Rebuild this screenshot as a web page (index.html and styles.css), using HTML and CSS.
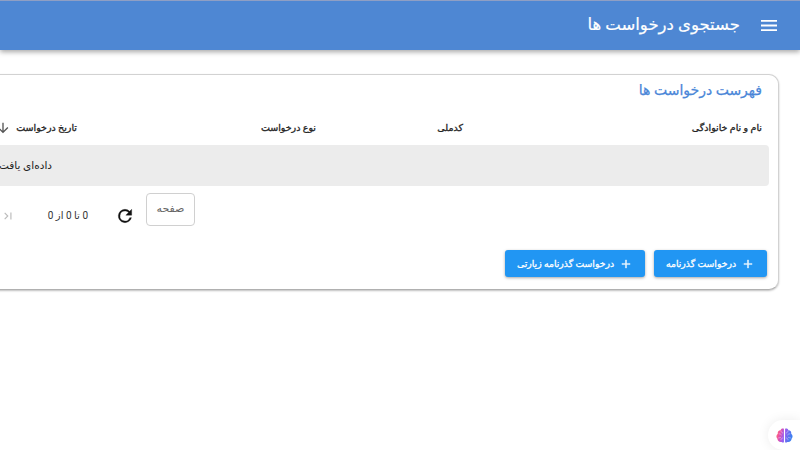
FILE: index.html
```html
<!DOCTYPE html>
<html lang="fa" dir="rtl">
<head>
<meta charset="utf-8">
<title>جستجوی درخواست ها</title>
<link rel="stylesheet" href="styles.css">
</head>
<body>
<header class="appbar">
  <svg class="menu-icon" viewBox="3 6 18 12" width="16" height="11" preserveAspectRatio="none"><path d="M3 18h18v-2H3v2zm0-5h18v-2H3v2zm0-7v2h18V6H3z"/></svg>
  <h1 class="appbar-title">جستجوی درخواست ها</h1>
</header>
<main class="content">
  <section class="card">
    <h2 class="card-title">فهرست درخواست ها</h2>
    <div class="table-head">
      <span class="col-name">نام و نام خانوادگی</span>
      <span class="col-code">کدملی</span>
      <span class="col-type">نوع درخواست</span>
      <span class="col-date">تاریخ درخواست
        <svg class="sort-icon" viewBox="0 0 24 24" width="16" height="16"><path d="M20 12l-1.41-1.41L13 16.17V4h-2v12.17l-5.58-5.59L4 12l8 8 8-8z"/></svg>
      </span>
    </div>
    <div class="empty-row"><span>داده‌ای یافت نشد</span></div>
    <div class="pager">
      <div class="page-box">صفحه</div>
      <svg class="refresh-icon" viewBox="0 0 24 24" width="20" height="20"><path d="M17.65 6.35A7.96 7.96 0 0 0 12 4a8 8 0 1 0 7.73 10h-2.08A6 6 0 1 1 12 6c1.66 0 3.14.69 4.22 1.78L13 11h7V4l-2.35 2.35z"/></svg>
      <span class="page-range">0 تا 0 از 0</span>
      <svg class="first-icon" viewBox="0 0 24 24" width="14" height="14"><path d="M5.59 7.41L10.18 12l-4.59 4.59L7 18l6-6-6-6zM16 6h2v12h-2z"/></svg>
    </div>
    <div class="actions">
      <button class="btn"><svg viewBox="0 0 24 24" width="14" height="14"><path d="M19 13h-6v6h-2v-6H5v-2h6V5h2v6h6v2z"/></svg>درخواست گذرنامه</button>
      <button class="btn"><svg viewBox="0 0 24 24" width="14" height="14"><path d="M19 13h-6v6h-2v-6H5v-2h6V5h2v6h6v2z"/></svg>درخواست گذرنامه زیارتی</button>
    </div>
  </section>
</main>
<div class="brain-badge">
  <svg viewBox="0 0 24 21" width="17" height="15">
    <defs><linearGradient id="bg" x1="0" x2="1" y1="0" y2="0.25"><stop offset="0" stop-color="#ff8a5c"/><stop offset="0.25" stop-color="#f0509f"/><stop offset="0.55" stop-color="#9a5cf0"/><stop offset="1" stop-color="#3f7ff0"/></linearGradient></defs>
    <path fill="url(#bg)" d="M11.2 1C9 0 7 1 6.5 3 3.500 3 2 5.500 2.500 8 0 10 0 13 2 15c0 3 3 5.500 6 4.500 1 1 3.200 1 3.200 0zM12.800 1c2.200-1 4.200 0 4.700 2 3 0 4.500 2.500 4 5 2.500 2 2.500 5 .5 7 0 3-3 5.500-6 4.500-1 1-3.200 1-3.200 0z"/>
    <path class="brain-lines" d="M4 8c2 0 3 1 4 2M7 3.500c0 2 1 3 3 3.500M3 14c2 0 3-1 4-1M7 17c0-1.500 1-3 3-3M20 8c-2 0-3 1-4 2M17 3.500c0 2-1 3-3 3.500M21 14c-2 0-3-1-4-1M17 17c0-1.500-1-3-3-3"/>
  </svg>
</div>
</body>
</html>
```
FILE: styles.css
```css
* { box-sizing: border-box; }
html, body { margin: 0; height: 100%; }
body {
  width: 800px;
  height: 450px;
  overflow: hidden;
  background: #fff;
  font-family: Roboto, "DejaVu Sans", sans-serif;
  color: #222;
  position: relative;
}
.appbar {
  height: 50px;
  background: #4e87d3;
  border-top: 1px solid #8f9fc4;
  box-shadow: 0 2px 5px rgba(0,0,0,.35);
  display: flex;
  align-items: center;
  padding-right: 23px;
  gap: 21px;
  color: #fff;
}
.menu-icon { fill: #fff; flex: none; }
.appbar-title {
  margin: 0 0 3px;
  font-size: 16.5px;
  font-weight: 400;
  -webkit-text-stroke: .2px #fff;
}
.content { padding: 24px 21px 0 0; }
.card {
  width: 900px;
  height: 216px;
  background: #fff;
  border: 1px solid #d2d2d2;
  border-bottom-color: #b0b0b0;
  border-radius: 10px;
  box-shadow: 0 1px 2px rgba(0,0,0,.25);
  padding: 0 9px 0 0;
}
.card-title {
  margin: 0;
  padding: 7px 7px 0 0;
  height: 38px;
  font-size: 14px;
  font-weight: 400;
  color: #4a86d8;
  -webkit-text-stroke: .25px #4a86d8;
}
.table-head {
  display: grid;
  grid-template-columns: 299px 147px 239px 1fr;
  height: 32px;
  align-items: center;
  padding: 0 7px 3px 0;
  font-size: 9.5px;
  font-weight: 400;
  color: #222;
  -webkit-text-stroke: .3px #222;
}
.col-date { display: flex; align-items: center; gap: 5px; }
.sort-icon { fill: #555; flex: none; stroke: none; }
.empty-row {
  height: 41px;
  background: #ececec;
  border-radius: 4px;
  display: flex;
  align-items: center;
  padding-right: 717px;
  font-size: 10.5px;
  color: #222;
  white-space: nowrap;
}
.pager {
  display: flex;
  align-items: center;
  height: 33px;
  margin-top: 7px;
  padding-right: 574px;
  font-size: 10px;
  color: #333;
}
.page-box {
  width: 49px;
  height: 33px;
  border: 1px solid #d0d0d0;
  border-radius: 4px;
  display: flex;
  align-items: center;
  justify-content: center;
  padding-bottom: 2px;
  font-size: 11px;
  color: #666;
  flex: none;
}
.refresh-icon { fill: #111; stroke: #111; stroke-width: .4; margin: 12px 11px 0 0; flex: none; }
.page-range { margin: 12px 27px 0 0; white-space: nowrap; flex: none; }
.first-icon { fill: #bbb; margin: 12px 33px 0 0; flex: none; }
.actions {
  display: flex;
  gap: 9px;
  margin: 24px 2px 0 0;
}
.btn {
  height: 27px;
  background: #2196f3;
  color: #fff;
  border: 0;
  border-radius: 3px;
  box-shadow: 0 1px 3px rgba(0,0,0,.35);
  font-family: inherit;
  font-size: 9.3px;
  font-weight: 400;
  -webkit-text-stroke: .3px #fff;
  white-space: nowrap;
  display: flex;
  align-items: center;
  justify-content: center;
  gap: 5px;
  padding: 0;
}
.btn:nth-child(1) { width: 113px; }
.btn:nth-child(2) { width: 140px; }
.btn svg { fill: #fff; stroke: #fff; stroke-width: .5; flex: none; }
.brain-badge {
  position: absolute;
  right: 0;
  bottom: 0;
  width: 32px;
  height: 30px;
  border-radius: 17px 0 0 17px;
  background: #fff;
  box-shadow: 0 0 12px rgba(0,0,0,.08);
  display: flex;
  align-items: center;
  justify-content: center;
}
.brain-lines { fill: none; stroke: #fff; stroke-width: 1; opacity: .55; }
```
